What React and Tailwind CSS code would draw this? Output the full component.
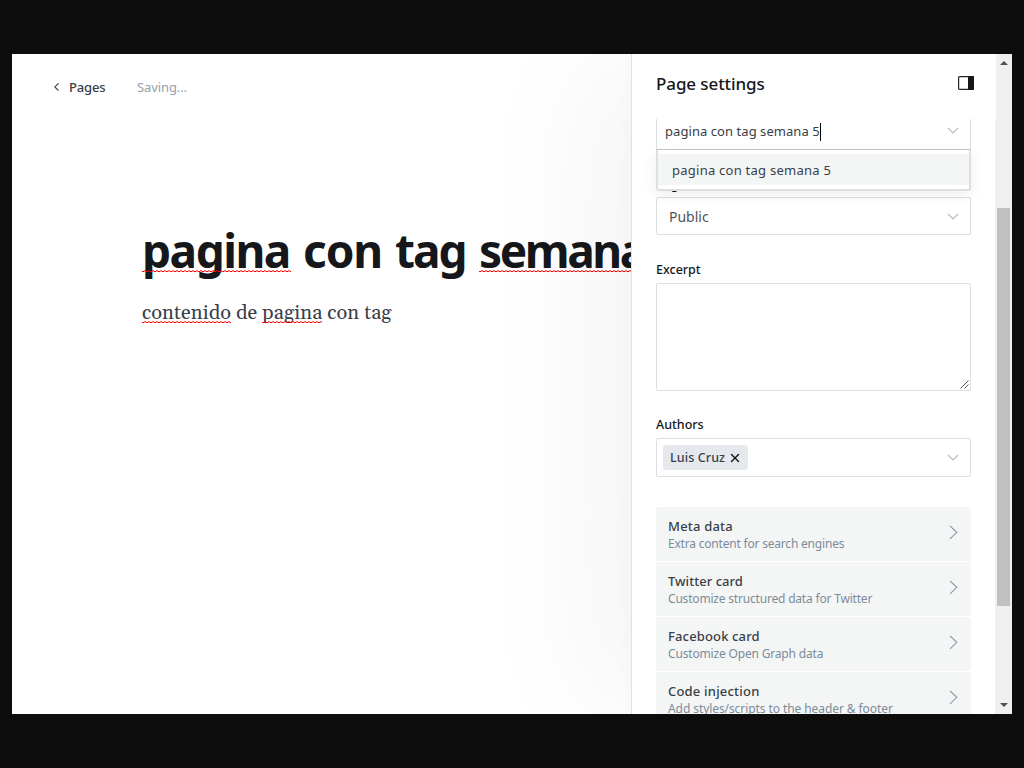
import { X } from 'lucide-react';

function Squiggle({ id, className }) {
  return (
    <svg className={`absolute left-0 h-[3px] ${className}`} aria-hidden="true">
      <defs>
        <pattern id={id} width="4" height="3" patternUnits="userSpaceOnUse">
          <path d="M-1 .6 L1 1.8 L3 .6 L5 1.8" fill="none" stroke="#ff0000" strokeWidth="1" />
        </pattern>
      </defs>
      <rect width="100%" height="3" fill={`url(#${id})`} />
    </svg>
  );
}

function ChevronDown({ className = '' }) {
  return (
    <svg className={`h-[7px] w-[12px] shrink-0 ${className}`} viewBox="0 0 12 7" fill="none">
      <path d="M1 1 L6 6 L11 1" stroke="#b4bcc6" strokeWidth="1.2" />
    </svg>
  );
}

function Editor() {
  return (
    <main className="w-[619px] shrink-0 overflow-hidden bg-white">
      <div className="flex h-[66px] items-center pl-[41px] text-[13px]">
        <svg className="mr-[9px] h-[9px] w-[7px]" viewBox="0 0 7 9" fill="none">
          <path d="M5.5 .3 L1.8 3.9 L5.5 7.5" stroke="#394047" strokeWidth="1.1" />
        </svg>
        <span className="w-[68px] pt-[2px] font-medium tracking-[-0.15px] text-[#394047]">Pages</span>
        <span className="pt-[2px] tracking-[-0.1px] text-[#95a1b1]">Saving...</span>
      </div>
      <h1 className="mt-[100px] flex pl-[130px] text-[46px] leading-[60px] font-bold whitespace-nowrap text-[#15171a]">
        <span className="relative w-[161px] shrink-0 tracking-[-1.5px]">
          pagina
          <Squiggle id="wave-title-a" className="top-[50px] w-[149px]" />
        </span>
        <span className="w-[92px] shrink-0 tracking-[-1.1px]">con</span>
        <span className="w-[84px] shrink-0 tracking-[-2px]">tag</span>
        <span className="relative shrink-0 tracking-[-2.4px]">
          semana
          <Squiggle id="wave-title-b" className="top-[50px] w-[180px]" />
        </span>
      </h1>
      <p className="mt-[18px] flex pl-[130px] font-[Gelasio,Georgia,'Liberation_Serif',serif] text-[20px] leading-[30px] tracking-[0.1px] whitespace-pre text-[#394047]">
        <span className="relative">
          contenido
          <Squiggle id="wave-body-a" className="top-[23px] w-[89px]" />
        </span>
        <span> de </span>
        <span className="relative">
          pagina
          <Squiggle id="wave-body-b" className="top-[23px] w-[60px]" />
        </span>
        <span> con tag</span>
      </p>
    </main>
  );
}

const cards = [
  ['Meta data', 'Extra content for search engines', 'tracking-[0.2px]', 'tracking-[-0.2px]'],
  ['Twitter card', 'Customize structured data for Twitter', 'tracking-[0.04px]', 'tracking-[-0.19px]'],
  ['Facebook card', 'Customize Open Graph data', 'tracking-[0.15px]', 'tracking-[-0.17px]'],
  ['Code injection', 'Add styles/scripts to the header & footer', 'tracking-[0.2px]', 'tracking-[-0.08px]'],
];

function SettingsBody() {
  return (
    <div className="min-h-0 flex-1 overflow-hidden border-r border-[#f0f0f0] pr-6 pl-6">
      <div className="relative z-10 flex h-[31px] items-center justify-between border-x border-b border-x-[#dddfe2] border-b-[#c5c7ca] bg-white pr-[11px] pl-[8px]">
        <div className="flex items-center pb-[5px] text-[13px] text-[#394047]">
          <span className="pt-px tracking-[0.06px]">pagina con tag semana 5</span>
          <span className="h-[18px] w-px bg-black" />
        </div>
        <ChevronDown className="mb-[7px]" />
        <div className="absolute -right-px -left-px top-[31px] rounded-b-[3px] border-x-2 border-b-2 border-[#dddfe4] bg-white pt-[4px] pb-[4px] shadow-[0_4px_16px_rgba(0,0,0,0.07)]">
          <div className="h-[31px] bg-[#f4f6f6] pl-[14px] text-[13px] leading-[33px] tracking-[0.25px] text-[#394047]">
            pagina con tag semana 5
          </div>
        </div>
      </div>
      <div className="mt-[25px] h-[22px] text-[12.5px] leading-[20px] font-medium text-[#15171a]">Page access</div>
      <div className="flex h-[38px] items-center justify-between rounded-[2px] border border-[#dddfe2] pr-[11px] pl-[12px] text-[14px] text-[#50555c]">
        <span>Public</span>
        <ChevronDown />
      </div>
      <div className="mt-[25px] h-[23px] text-[12.5px] leading-[20px] font-medium text-[#15171a]">Excerpt</div>
      <div className="flex h-[108px] items-end justify-end rounded-[2px] border border-[#dddfe2] p-px">
        <svg className="h-[9px] w-[9px]" viewBox="0 0 9 9">
          <path d="M.5 8.5 L8.5 .5 M4.5 8.5 L8.5 4.5" stroke="#4a4a4a" strokeWidth=".9" />
        </svg>
      </div>
      <div className="mt-[24px] h-[23px] text-[12.5px] leading-[20px] font-medium text-[#15171a]">Authors</div>
      <div className="flex h-[39px] items-center justify-between rounded-[2px] border border-[#dddfe2] pr-[11px] pl-[6px]">
        <div className="flex h-[25px] w-[85px] items-center rounded-[3px] bg-[#e5e9ed] pl-[7px] text-[12.5px] font-medium text-[#394047]">
          <span className="w-[58px] pt-[2px] tracking-[0.1px]">Luis Cruz</span>
          <X className="mt-px h-[14px] w-[14px] text-[#15171a]" strokeWidth={2.4} />
        </div>
        <ChevronDown />
      </div>
      <div className="mt-[30px] flex flex-col gap-px overflow-hidden rounded-[3px]">
        {cards.map(([title, text, titleTrack, textTrack]) => (
          <div key={title} className="flex h-[54px] justify-between bg-[#f4f6f6] pt-[10px] pr-[13px] pl-[12px]">
            <div>
              <div className={`text-[13px] leading-[18px] font-medium text-[#394047] ${titleTrack}`}>{title}</div>
              <div className={`text-[12px] leading-[18px] whitespace-nowrap text-[#7c8b9a] ${textTrack}`}>{text}</div>
            </div>
            <svg className="mt-[8px] h-[15px] w-[9px]" viewBox="0 0 9 15" fill="none">
              <path d="M1 .8 L7.8 7.3 L1 13.8" stroke="#8996a5" strokeWidth="1.1" />
            </svg>
          </div>
        ))}
      </div>
    </div>
  );
}

function SettingsPanel() {
  return (
    <aside className="relative flex w-[365px] shrink-0 flex-col border-l border-[#e1e2e3] bg-white shadow-[-6px_0_20px_-4px_rgba(0,0,0,0.015),-60px_0_120px_-10px_rgba(0,0,0,0.042)]">
      <header className="flex h-[65px] shrink-0 items-start justify-between pt-[17px] pr-[22px] pl-6">
        <h2 className="text-[17px] leading-[26px] font-medium tracking-[-0.1px] text-[#15171a]">Page settings</h2>
        <svg className="mt-[5px] h-[14px] w-[16px]" viewBox="0 0 16 14" fill="none">
          <rect x=".6" y=".6" width="14.8" height="12.8" rx="1" stroke="#222427" strokeWidth="1.2" />
          <rect x="10" y="0" width="6" height="14" rx="1" fill="#15171a" />
        </svg>
      </header>
      <SettingsBody />
    </aside>
  );
}

function Scrollbar() {
  return (
    <div className="relative flex w-[16px] shrink-0 flex-col items-center bg-[#f0f0f0]">
      <svg className="mt-[7px] mr-[1px] h-[4px] w-[8px]" viewBox="0 0 8 4">
        <path d="M0 4 L4 0 L8 4Z" fill="#505050" />
      </svg>
      <div className="mt-[143px] mr-[1px] h-[398px] w-[13px] bg-[#c1c1c1]" />
      <svg className="mt-[97px] mr-[1px] h-[4px] w-[8px]" viewBox="0 0 8 4">
        <path d="M0 0 L4 4 L8 0Z" fill="#505050" />
      </svg>
    </div>
  );
}

export default function App() {
  return (
    <div className="h-[768px] w-[1024px] overflow-hidden bg-[#0d0d0d] px-[12px] py-[54px] font-['Noto_Sans','Open_Sans',sans-serif]">
      <div className="flex h-[660px] w-[1000px] overflow-hidden bg-white">
        <Editor />
        <SettingsPanel />
        <Scrollbar />
      </div>
    </div>
  );
}
